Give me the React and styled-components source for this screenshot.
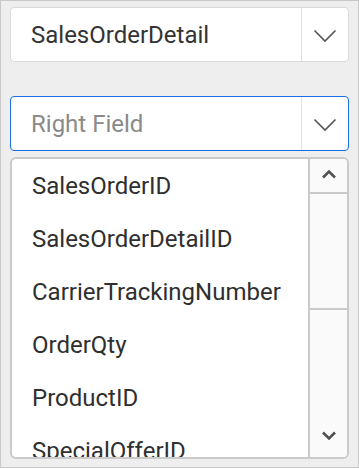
import React from 'react'
import styled, { createGlobalStyle } from 'styled-components'

const fields = [
	'SalesOrderID',
	'SalesOrderDetailID',
	'CarrierTrackingNumber',
	'OrderQty',
	'ProductID',
	'SpecialOfferID',
]

const Chevron = ({ up, thick }) =>
	thick ? (
		<svg width="16" height="10" viewBox="0 0 16 10">
			<path
				d={up ? 'M2 8.5 L8 2.5 L14 8.5' : 'M2 1.5 L8 7.5 L14 1.5'}
				fill="none"
				stroke="#505050"
				strokeWidth="2.6"
			/>
		</svg>
	) : (
		<svg width="24" height="14" viewBox="0 0 24 14">
			<path d="M1.5 1.5 L12 12 L22.5 1.5" fill="none" stroke="#555" strokeWidth="1.6" />
		</svg>
	)

const App = () => {
	return (
		<>
			<GlobalStyle />
			<Frame>
				<Select>
					<SelectText>SalesOrderDetail</SelectText>
					<SelectButton>
						<Chevron />
					</SelectButton>
				</Select>
				<Select $focused>
					<SelectText $placeholder>Right Field</SelectText>
					<SelectButton>
						<Chevron />
					</SelectButton>
				</Select>
				<List>
					<Items>
						{fields.map((f) => (
							<Item key={f}>{f}</Item>
						))}
					</Items>
					<Scrollbar>
						<ScrollButton>
							<Chevron up thick />
						</ScrollButton>
						<Thumb />
						<Track />
						<ScrollButton $bottom>
							<Chevron thick />
						</ScrollButton>
					</Scrollbar>
				</List>
			</Frame>
		</>
	)
}

const GlobalStyle = createGlobalStyle`
	body {
		margin: 0;
		background: #eeeeee;
		font-family: Roboto, "Liberation Sans", sans-serif;
	}
`

const Frame = styled.div`
	width: 359px;
	height: 468px;
	box-sizing: border-box;
	border: 1px solid #c8c8c8;
	background: #eeeeee;
	padding: 6px 9px 7px 9px;
	display: flex;
	flex-direction: column;
	overflow: hidden;
`

const Select = styled.div`
	height: 55px;
	flex-shrink: 0;
	box-sizing: border-box;
	display: flex;
	align-items: stretch;
	background: #fff;
	border: 1px solid ${(p) => (p.$focused ? '#1a6fe8' : '#dadada')};
	border-radius: 4px;
	margin-bottom: ${(p) => (p.$focused ? '6px' : '34px')};
`

const SelectText = styled.div`
	flex: 1;
	display: flex;
	align-items: center;
	padding-left: 20px;
	font-size: 24px;
	color: ${(p) => (p.$placeholder ? '#8a8a8a' : '#333')};
`

const SelectButton = styled.div`
	width: 46px;
	border-left: 1px solid #e2e2e2;
	display: flex;
	align-items: center;
	justify-content: center;
	padding-top: 2px;
`

const List = styled.div`
	height: 302px;
	flex-shrink: 0;
	box-sizing: border-box;
	border: 2px solid #cacaca;
	border-radius: 6px;
	background: #fff;
	display: flex;
	overflow: hidden;
`

const Items = styled.div`
	flex: 1;
	overflow: hidden;
`

const Item = styled.div`
	height: 53px;
	display: flex;
	align-items: center;
	padding-left: 20px;
	font-size: 24px;
	color: #2f2f2f;
	white-space: nowrap;
`

const Scrollbar = styled.div`
	width: 39px;
	box-sizing: border-box;
	border-left: 2px solid #cacaca;
	background: #fafafa;
	display: flex;
	flex-direction: column;
`

const ScrollButton = styled.div`
	height: ${(p) => (p.$bottom ? '38px' : '35px')};
	display: flex;
	align-items: center;
	justify-content: center;
	border-bottom: ${(p) => (p.$bottom ? 'none' : '2px solid #cacaca')};
	padding-bottom: 4px;
	box-sizing: border-box;
`

const Thumb = styled.div`
	height: 116px;
	box-sizing: border-box;
	border-bottom: 2px solid #cacaca;
`

const Track = styled.div`
	flex: 1;
`

export default App
